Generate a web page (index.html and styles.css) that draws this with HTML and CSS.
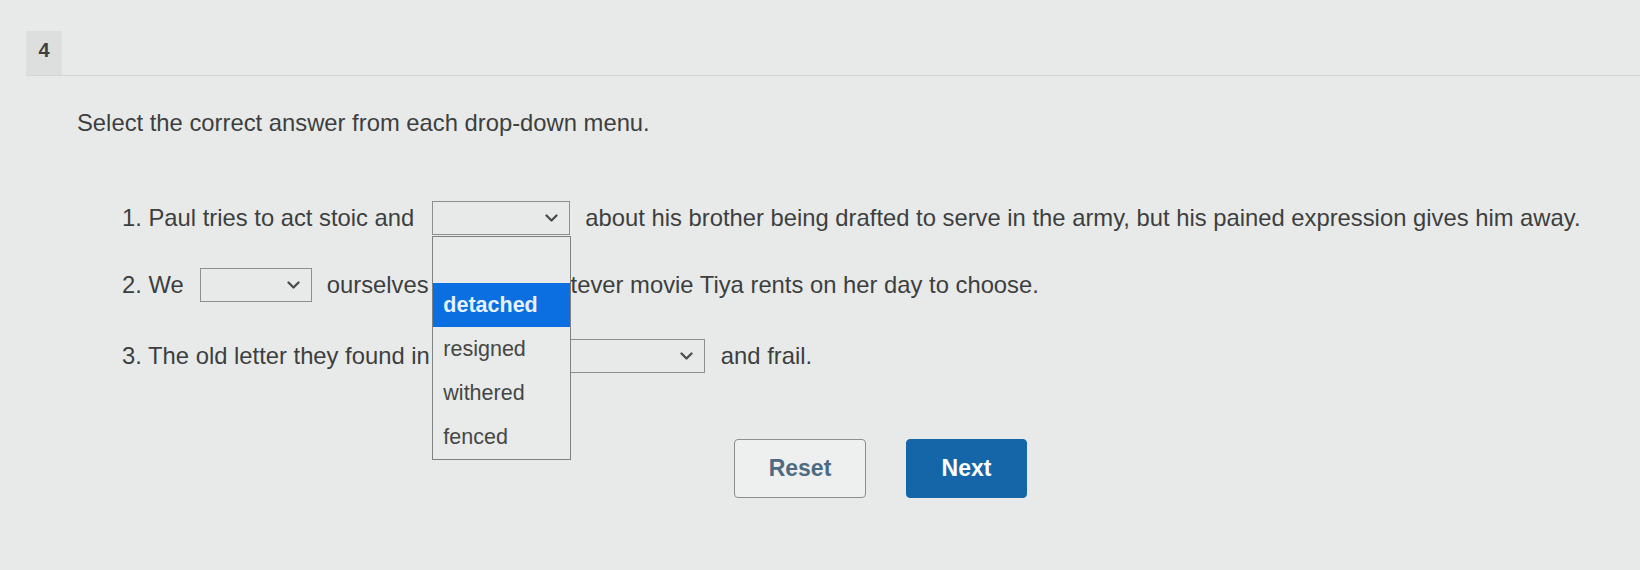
FILE: index.html
```html
<!DOCTYPE html>
<html lang="en">
<head>
<meta charset="utf-8">
<title>Question 4</title>
<link rel="stylesheet" href="styles.css">
</head>
<body>
<div class="topbar"><div class="qnum">4</div></div>
<main class="content">
  <p class="prompt">Select the correct answer from each drop-down menu.</p>

  <div class="row row-1">
    <span>1. Paul tries to act stoic and</span>
    <div class="select select-1 open">
      <svg class="chev" viewBox="0 0 13 8" width="13" height="8"><polyline points="1.5,1.5 6.5,6.5 11.5,1.5"/></svg>
      <ul class="listbox">
        <li class="opt empty"></li>
        <li class="opt active">detached</li>
        <li class="opt">resigned</li>
        <li class="opt">withered</li>
        <li class="opt">fenced</li>
      </ul>
    </div>
    <span>about his brother being drafted to serve in the army, but his pained expression gives him away.</span>
  </div>

  <div class="row row-2">
    <span>2. We</span>
    <div class="select select-2">
      <svg class="chev" viewBox="0 0 13 8" width="13" height="8"><polyline points="1.5,1.5 6.5,6.5 11.5,1.5"/></svg>
    </div>
    <span>ourselves</span>
    <span class="covered-tail">tever movie Tiya rents on her day to choose.</span>
  </div>

  <div class="row row-3">
    <span>3. The old letter they found in</span>
    <div class="select select-3">
      <svg class="chev" viewBox="0 0 13 8" width="13" height="8"><polyline points="1.5,1.5 6.5,6.5 11.5,1.5"/></svg>
    </div>
    <span>and frail.</span>
  </div>

  <div class="actions">
    <button class="btn btn-reset" type="button">Reset</button>
    <button class="btn btn-next" type="button">Next</button>
  </div>
</main>
</body>
</html>
```

FILE: styles.css
```css
* { box-sizing: border-box; }

html, body {
  margin: 0;
  padding: 0;
}

body {
  width: 1640px;
  height: 570px;
  overflow: hidden;
  background: #e8eae9;
  color: #3d3f3f;
  font-family: "Liberation Sans", Arial, Helvetica, sans-serif;
}

.topbar {
  height: 76px;
  margin-left: 26px;
  border-bottom: 1px solid #d3d5d4;
  display: flex;
  align-items: flex-end;
}

.qnum {
  width: 36px;
  height: 44px;
  background: #dcdfde;
  display: flex;
  align-items: center;
  justify-content: center;
  padding-bottom: 6px;
  font-size: 20px;
  font-weight: bold;
  color: #3d3f3f;
}

.content {
  padding-left: 77px;
}

.prompt {
  margin: 31px 0 0;
  font-size: 23.8px;
  line-height: 32px;
}

.row {
  display: flex;
  align-items: center;
  height: 34px;
  padding-left: 45px;
  font-size: 23.8px;
  line-height: 34px;
  white-space: nowrap;
}

.row-1 { margin-top: 62px; }
.row-2 { margin-top: 33px; }
.row-3 { margin-top: 37px; }

.covered-tail {
  margin-left: 142px;
}

.select {
  position: relative;
  height: 34px;
  margin: 0 15px;
  border: 1px solid #8d9090;
  background: transparent;
  display: flex;
  align-items: center;
  justify-content: flex-end;
  padding-right: 11px;
  flex: none;
}

.select-1 { width: 138px; margin-left: 18px; }
.select-2 { width: 112px; margin-left: 16px; }
.select-3 { width: 168px; margin-left: 107px; margin-right: 16px; }

.chev {
  display: block;
}

.chev polyline {
  fill: none;
  stroke: #4a4c4c;
  stroke-width: 2.3;
  stroke-linecap: round;
  stroke-linejoin: round;
}

.listbox {
  position: absolute;
  left: -1px;
  top: 34px;
  width: 139px;
  margin: 0;
  padding: 2px 0 0;
  list-style: none;
  background: #e9ebea;
  border: 1px solid #7f8282;
  z-index: 2;
}

.opt {
  height: 44px;
  line-height: 44px;
  padding-left: 10px;
  font-size: 21.5px;
  color: #454747;
}

.opt.active {
  background: #0b6fe2;
  color: #e6f2ff;
  font-weight: bold;
}

.actions {
  display: flex;
  gap: 40px;
  margin-top: 66px;
  padding-left: 657px;
}

.btn {
  height: 59px;
  border-radius: 4px;
  font-family: "Liberation Sans", Arial, Helvetica, sans-serif;
  font-size: 23px;
  font-weight: bold;
  cursor: pointer;
}

.btn-reset {
  width: 132px;
  background: #eef0ef;
  border: 1.5px solid #8c8f8f;
  color: #4d6a83;
}

.btn-next {
  width: 121px;
  background: #1566a8;
  border: 1px solid #1566a8;
  color: #ffffff;
}
```
